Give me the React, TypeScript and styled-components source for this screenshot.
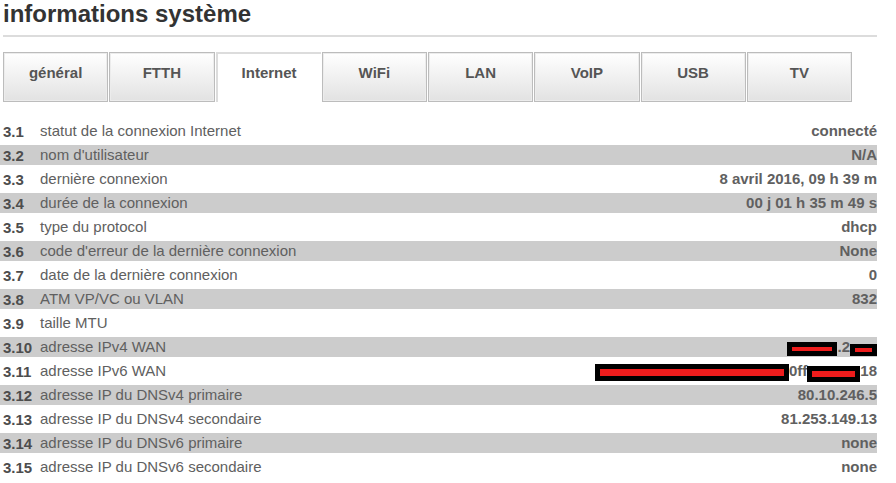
import React from 'react';
import styled, { createGlobalStyle } from 'styled-components';

const GlobalStyle = createGlobalStyle`
  body {
    margin: 0;
    background: #fff;
    font-family: "Liberation Sans", Arial, sans-serif;
  }
`;

type Redaction = { w: number; h: number; va: number };
type Part = string | Redaction;

interface InfoRow {
  num: string;
  label: string;
  value: Part[];
}

const tabs = ['général', 'FTTH', 'Internet', 'WiFi', 'LAN', 'VoIP', 'USB', 'TV'];

const rows: InfoRow[] = [
  { num: '3.1', label: 'statut de la connexion Internet', value: ['connecté'] },
  { num: '3.2', label: "nom d'utilisateur", value: ['N/A'] },
  { num: '3.3', label: 'dernière connexion', value: ['8 avril 2016, 09 h 39 m'] },
  { num: '3.4', label: 'durée de la connexion', value: ['00 j 01 h 35 m 49 s'] },
  { num: '3.5', label: 'type du protocol', value: ['dhcp'] },
  { num: '3.6', label: "code d'erreur de la dernière connexion", value: ['None'] },
  { num: '3.7', label: 'date de la dernière connexion', value: ['0'] },
  { num: '3.8', label: 'ATM VP/VC ou VLAN', value: ['832'] },
  { num: '3.9', label: 'taille MTU', value: [] },
  {
    num: '3.10',
    label: 'adresse IPv4 WAN',
    value: [{ w: 50, h: 14, va: -4 }, '.2', { w: 27, h: 12, va: -4 }],
  },
  {
    num: '3.11',
    label: 'adresse IPv6 WAN',
    value: [{ w: 194, h: 17, va: -5 }, '0ff', { w: 53, h: 16, va: -6 }, '18'],
  },
  { num: '3.12', label: 'adresse IP du DNSv4 primaire', value: ['80.10.246.5'] },
  { num: '3.13', label: 'adresse IP du DNSv4 secondaire', value: ['81.253.149.13'] },
  { num: '3.14', label: 'adresse IP du DNSv6 primaire', value: ['none'] },
  { num: '3.15', label: 'adresse IP du DNSv6 secondaire', value: ['none'] },
];

const App: React.FC = () => {
  return (
    <>
      <GlobalStyle />
      <Page>
        <Header>
          <Title>informations système</Title>
          <Rule />
          <TabBar>
            {tabs.map((t) => (
              <Tab key={t} $active={t === 'Internet'}>
                {t}
              </Tab>
            ))}
          </TabBar>
        </Header>
        <InfoList>
          {rows.map((r, i) => (
            <Row key={r.num} $shaded={i % 2 === 1}>
              <Num>{r.num}</Num>
              <Label>{r.label}</Label>
              <Value>
                {r.value.map((p, j) =>
                  typeof p === 'string' ? (
                    <span key={j}>{p}</span>
                  ) : (
                    <Redact key={j} $w={p.w} $h={p.h} $va={p.va} />
                  )
                )}
              </Value>
            </Row>
          ))}
        </InfoList>
      </Page>
    </>
  );
};

const Page = styled.div`
  width: 877px;
  color: #5f5f5f;
`;

const Header = styled.div`
  padding-left: 3px;
`;

const Title = styled.h1`
  margin: 0;
  font-size: 24px;
  line-height: 27px;
  font-weight: bold;
  color: #333;
`;

const Rule = styled.div`
  margin-top: 8px;
  height: 2px;
  width: 874px;
  background: #dcdcdc;
`;

const TabBar = styled.div`
  margin-top: 15px;
  width: 849px;
  display: grid;
  grid-template-columns: repeat(8, 1fr);
  column-gap: 1px;
`;

const Tab = styled.div<{ $active?: boolean }>`
  box-sizing: border-box;
  height: 50px;
  padding-top: 10px;
  text-align: center;
  font-size: 15px;
  line-height: 20px;
  font-weight: bold;
  color: #555;
  ${({ $active }) =>
    $active
      ? `
    background: #fff;
    border-top: 2px solid #dcdcdc;
    border-left: 2px solid #dcdcdc;
    padding-top: 9px;
  `
      : `
    background: linear-gradient(#ffffff, #e2e2e2);
    border: 1px solid #bcbcbc;
    box-shadow: inset 0 0 0 1px #ececec;
  `}
`;

const InfoList = styled.div`
  margin-top: 19px;
  display: flex;
  flex-direction: column;
  gap: 4px;
`;

const Row = styled.div<{ $shaded?: boolean }>`
  display: flex;
  align-items: flex-start;
  height: 20px;
  line-height: 20px;
  font-size: 15px;
  background: ${({ $shaded }) => ($shaded ? '#cccccc' : 'transparent')};
`;

const Num = styled.div`
  box-sizing: border-box;
  width: 40px;
  padding-left: 3px;
  line-height: 22px;
  font-weight: bold;
  color: #4d4d4d;
`;

const Label = styled.div`
  flex: 1;
  white-space: nowrap;
  color: #606060;
`;

const Value = styled.div`
  white-space: nowrap;
  font-weight: bold;
  color: #606060;
`;

const Redact = styled.span<{ $w: number; $h: number; $va: number }>`
  display: inline-block;
  box-sizing: border-box;
  width: ${({ $w }) => $w}px;
  height: ${({ $h }) => $h}px;
  vertical-align: ${({ $va }) => $va}px;
  background: #ee1c1c;
  border-style: solid;
  border-color: #000;
  border-width: ${({ $h }) => ($h < 13 ? '4px 5px' : '5px')};
`;

export default App;
